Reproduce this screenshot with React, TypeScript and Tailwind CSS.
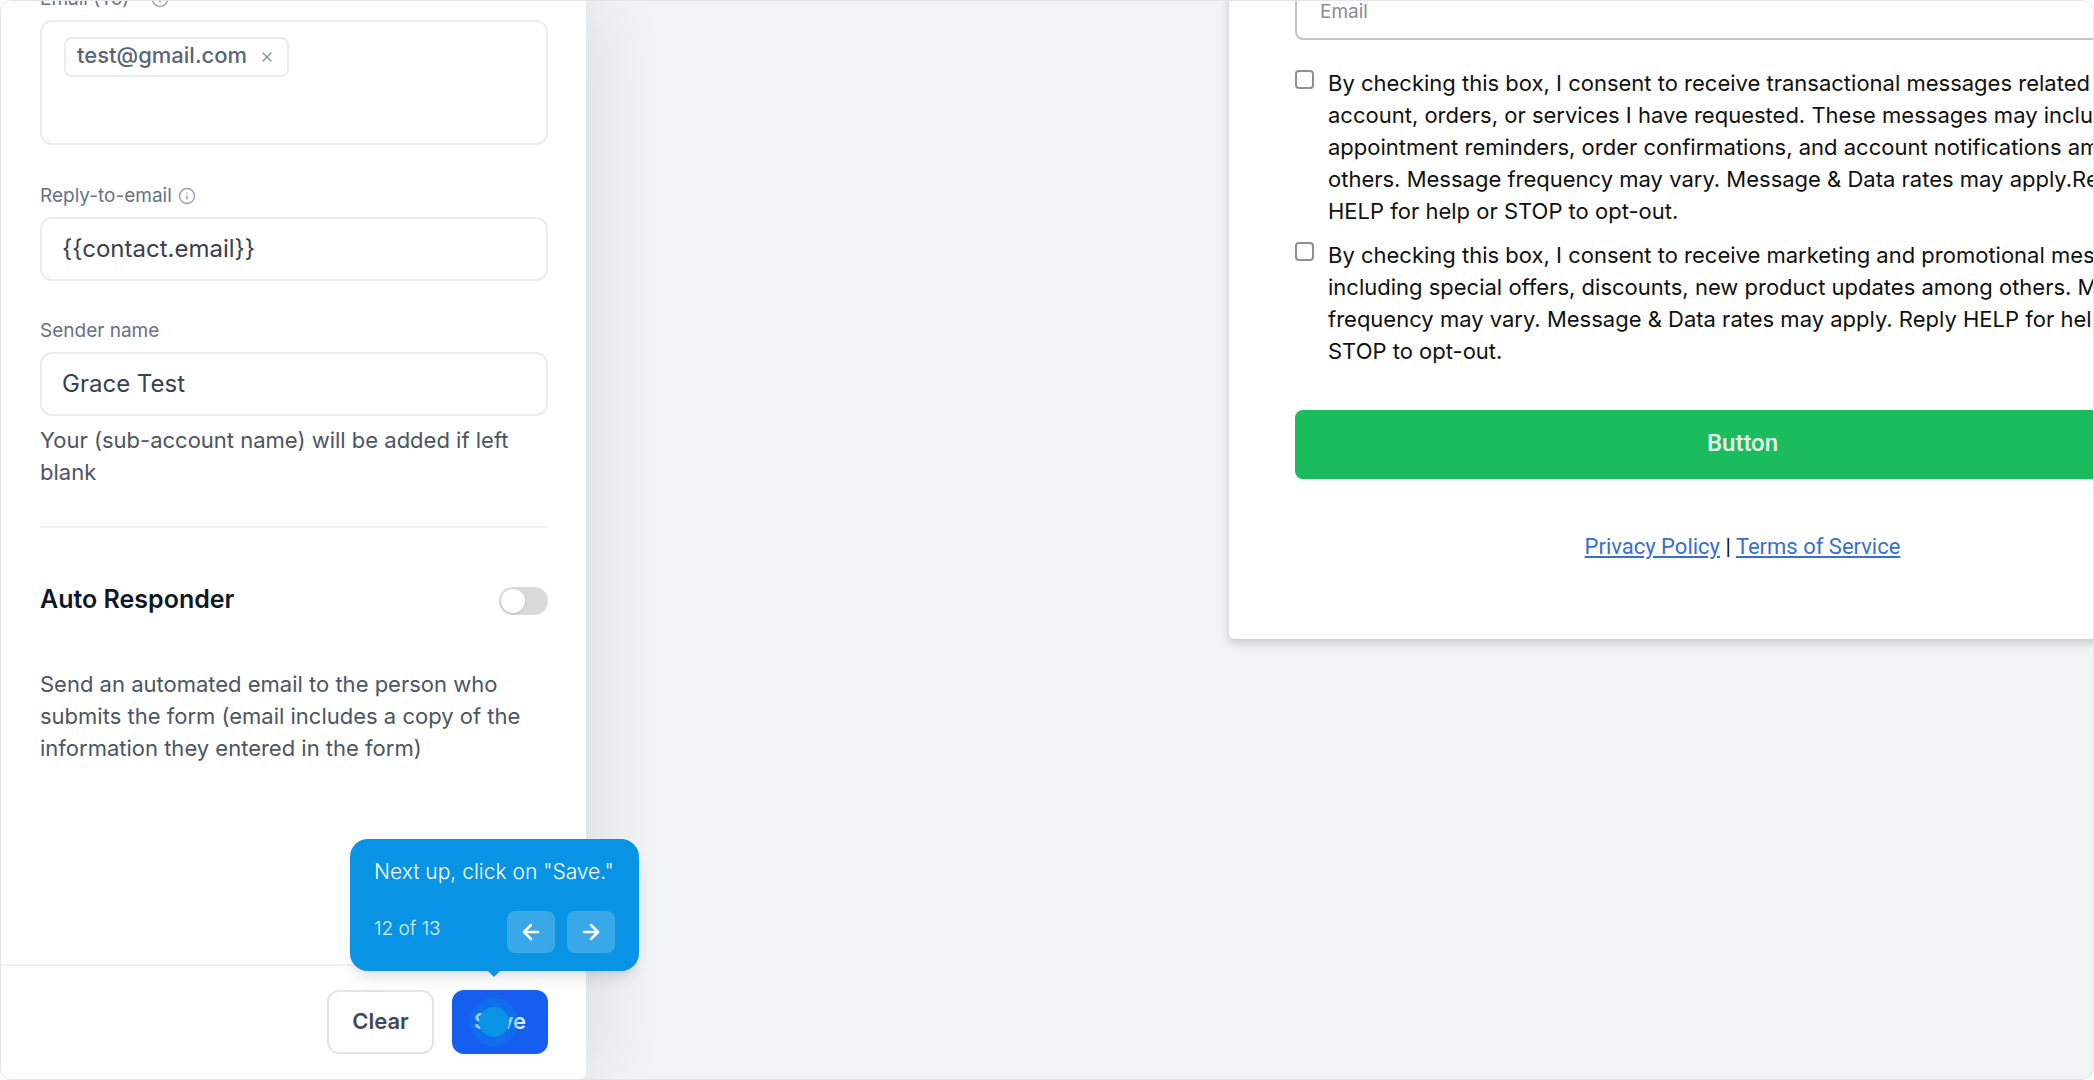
import { useState } from "react";
import { ArrowLeft, ArrowRight, Info, X } from "lucide-react";

const consents = [
  {
    id: "transactional",
    text: "By checking this box, I consent to receive transactional messages related to my account, orders, or services I have requested. These messages may include appointment reminders, order confirmations, and account notifications among others. Message frequency may vary. Message & Data rates may apply.Reply HELP for help or STOP to opt-out.",
  },
  {
    id: "marketing",
    text: "By checking this box, I consent to receive marketing and promotional messages, including special offers, discounts, new product updates among others. Message frequency may vary. Message & Data rates may apply. Reply HELP for help or STOP to opt-out.",
  },
];

function TourTip() {
  return (
    <div
      role="dialog"
      aria-label="Guide"
      className="absolute bottom-[83px] -left-[102px] z-20 w-[289px] rounded-[18px] bg-[#0893e4] px-6 pt-[17px] pb-[18px] text-white shadow-lg"
    >
      <p className="text-[21px] leading-[32px] font-light whitespace-nowrap">Next up, click on "Save."</p>
      <div className="mt-[23px] flex items-center gap-3">
        <span className="flex-1 pb-1.5 text-[19px] font-light text-white/85">12 of 13</span>
        <button type="button" aria-label="Previous" className="flex h-[42px] w-12 items-center justify-center rounded-lg bg-white/20">
          <ArrowLeft className="size-6" strokeWidth={2.5} />
        </button>
        <button type="button" aria-label="Next" className="flex h-[42px] w-12 items-center justify-center rounded-lg bg-white/20">
          <ArrowRight className="size-6" strokeWidth={2.5} />
        </button>
      </div>
      <div className="absolute -bottom-[6px] left-[137px] h-[7px] w-[14px] bg-[#0893e4] [clip-path:polygon(0_0,100%_0,50%_100%)]" />
    </div>
  );
}

function Settings() {
  const [emails, setEmails] = useState(["test@gmail.com"]);
  const [autoResponder, setAutoResponder] = useState(false);

  return (
    <aside className="relative z-10 flex w-[585px] shrink-0 flex-col rounded-br-md bg-white text-[#4b5563] shadow-[0_0_80px_rgba(0,0,0,0.12)]">
      <div className="min-h-0 flex-1 pr-[38px] pl-[39px]">
        {/* Recipients */}
        <div className="-mt-[17px] flex h-[30px] items-center gap-[22px] text-[19px] text-[#667085]">
          <span>Email (To)</span>
          <Info className="size-[18px] text-[#98a2b3]" strokeWidth={2} />
        </div>
        <div className="mt-1.5 h-[125px] rounded-xl border-2 border-[#ebecee] px-[22px] py-[15px]">
          {emails.map((email) => (
            <span key={email} className="inline-flex h-10 items-center gap-3 rounded-lg border-2 border-[#ebecee] pr-3 pb-1 pl-[11px] text-[22px] font-medium text-[#5b6473]">
              {email}
              <button type="button" className="pt-1" aria-label={`Remove ${email}`} onClick={() => setEmails(emails.filter((e) => e !== email))}>
                <X className="size-4 text-[#8b93a0]" strokeWidth={2} />
              </button>
            </span>
          ))}
        </div>

        {/* Reply-to */}
        <div className="mt-9 flex h-[30px] items-center gap-1.5 text-[19px] text-[#667085]">
          <label htmlFor="reply-to">Reply-to-email</label>
          <Info className="size-[18px] text-[#98a2b3]" strokeWidth={2} />
        </div>
        <input
          id="reply-to"
          defaultValue="{{contact.email}}"
          className="mt-1.5 block h-16 w-full rounded-xl border-2 border-[#ebecee] px-5 pb-0.5 text-2xl text-[#374151] outline-none"
        />

        {/* Sender */}
        <div className="mt-[35px] flex h-[30px] items-center text-[19px] text-[#667085]">
          <label htmlFor="sender">Sender name</label>
        </div>
        <input
          id="sender"
          defaultValue="Grace Test"
          className="mt-1.5 block h-16 w-full rounded-xl border-2 border-[#ebecee] px-5 pb-0.5 text-2xl text-[#374151] outline-none"
        />
        <p className="mt-2 text-[22px] leading-[32px]">Your (sub-account name) will be added if left blank</p>

        <hr className="mt-[38px] border-t-2 border-[#f1f2f4]" />

        {/* Auto responder */}
        <div className="mt-14 flex h-8 items-center justify-between">
          <label htmlFor="auto-responder" className="text-[25px] font-semibold text-[#101828]">Auto Responder</label>
          <input
            id="auto-responder"
            type="checkbox"
            role="switch"
            checked={autoResponder}
            onChange={(e) => setAutoResponder(e.target.checked)}
            className="mt-0.5 h-7 w-[49px] appearance-none rounded-full bg-[#d9d9d9] before:m-0.5 before:block before:size-6 before:rounded-full before:bg-white before:shadow before:content-[''] checked:bg-blue-600 checked:before:ml-[23px]"
          />
        </div>
        <p className="mt-[52px] text-[22px] leading-[32px]">
          Send an automated email to the person who submits the form (email includes a copy of the information they entered in the form)
        </p>
      </div>

      <div className="flex justify-end gap-[18px] border-t-2 border-[#f1f2f4] pt-6 pr-[38px] pb-[25px]">
        <button type="button" className="h-16 w-[107px] rounded-xl border-2 border-[#e2e4e8] pb-0.5 text-[22px] font-semibold text-[#414958]">
          Clear
        </button>
        <div className="relative">
          <button type="button" className="h-16 w-24 rounded-xl bg-[#155eef] pb-0.5 text-[22px] font-semibold text-[#d8ecff]">
            Save
          </button>
          <span className="pointer-events-none absolute top-2 left-[18px] flex size-12 items-center justify-center rounded-full bg-[#0893e4]/30">
            <span className="size-[30px] rounded-full bg-[#0893e4]" />
          </span>
          <TourTip />
        </div>
      </div>
    </aside>
  );
}

function FormPreview() {
  return (
    <main className="min-w-0 flex-1 overflow-hidden pl-[643px]">
      <form className="w-[1027px] rounded-b-md bg-white px-[66px] pb-[76px] shadow-[0_4px_10px_rgba(16,24,40,0.2)]">
        <input
          type="email"
          aria-label="Email"
          placeholder="Email"
          className="-mt-[22px] block h-[61px] w-full rounded-lg border-2 border-[#c4c4c4] px-[23px] pt-1 text-[19px] outline-none placeholder:text-[#8c8c8c]"
        />
        <div className="mt-[27px] flex flex-col gap-3">
          {consents.map((c) => (
            <div key={c.id} className="flex items-start gap-3.5">
              <input id={c.id} type="checkbox" className="mt-[3px] size-[19px] shrink-0 appearance-none rounded border-2 border-[#8f8f8f] bg-white checked:bg-blue-600" />
              <label htmlFor={c.id} className="text-[22px] leading-[32px] text-[#101010]">{c.text}</label>
            </div>
          ))}
        </div>
        <button type="button" className="mt-[43px] block h-[69px] w-full rounded-lg bg-[#1abc5e] pb-[3px] font-[Roboto,sans-serif] text-2xl font-medium text-white/90">
          Button
        </button>
        <p className="mt-[52px] text-center font-[Roboto,sans-serif] text-[22px] leading-[32px] text-[#101010]">
          <a href="#privacy" className="text-[#3570d0] underline">Privacy Policy</a> |{" "}
          <a href="#terms" className="text-[#3570d0] underline">Terms of Service</a>
        </p>
      </form>
    </main>
  );
}

export default function App() {
  return (
    <div className="h-screen bg-white font-[Inter,sans-serif]">
      <div className="flex h-full overflow-hidden rounded-xl border border-[#e4e6eb] bg-[#f2f3f5]">
        <Settings />
        <FormPreview />
      </div>
    </div>
  );
}
